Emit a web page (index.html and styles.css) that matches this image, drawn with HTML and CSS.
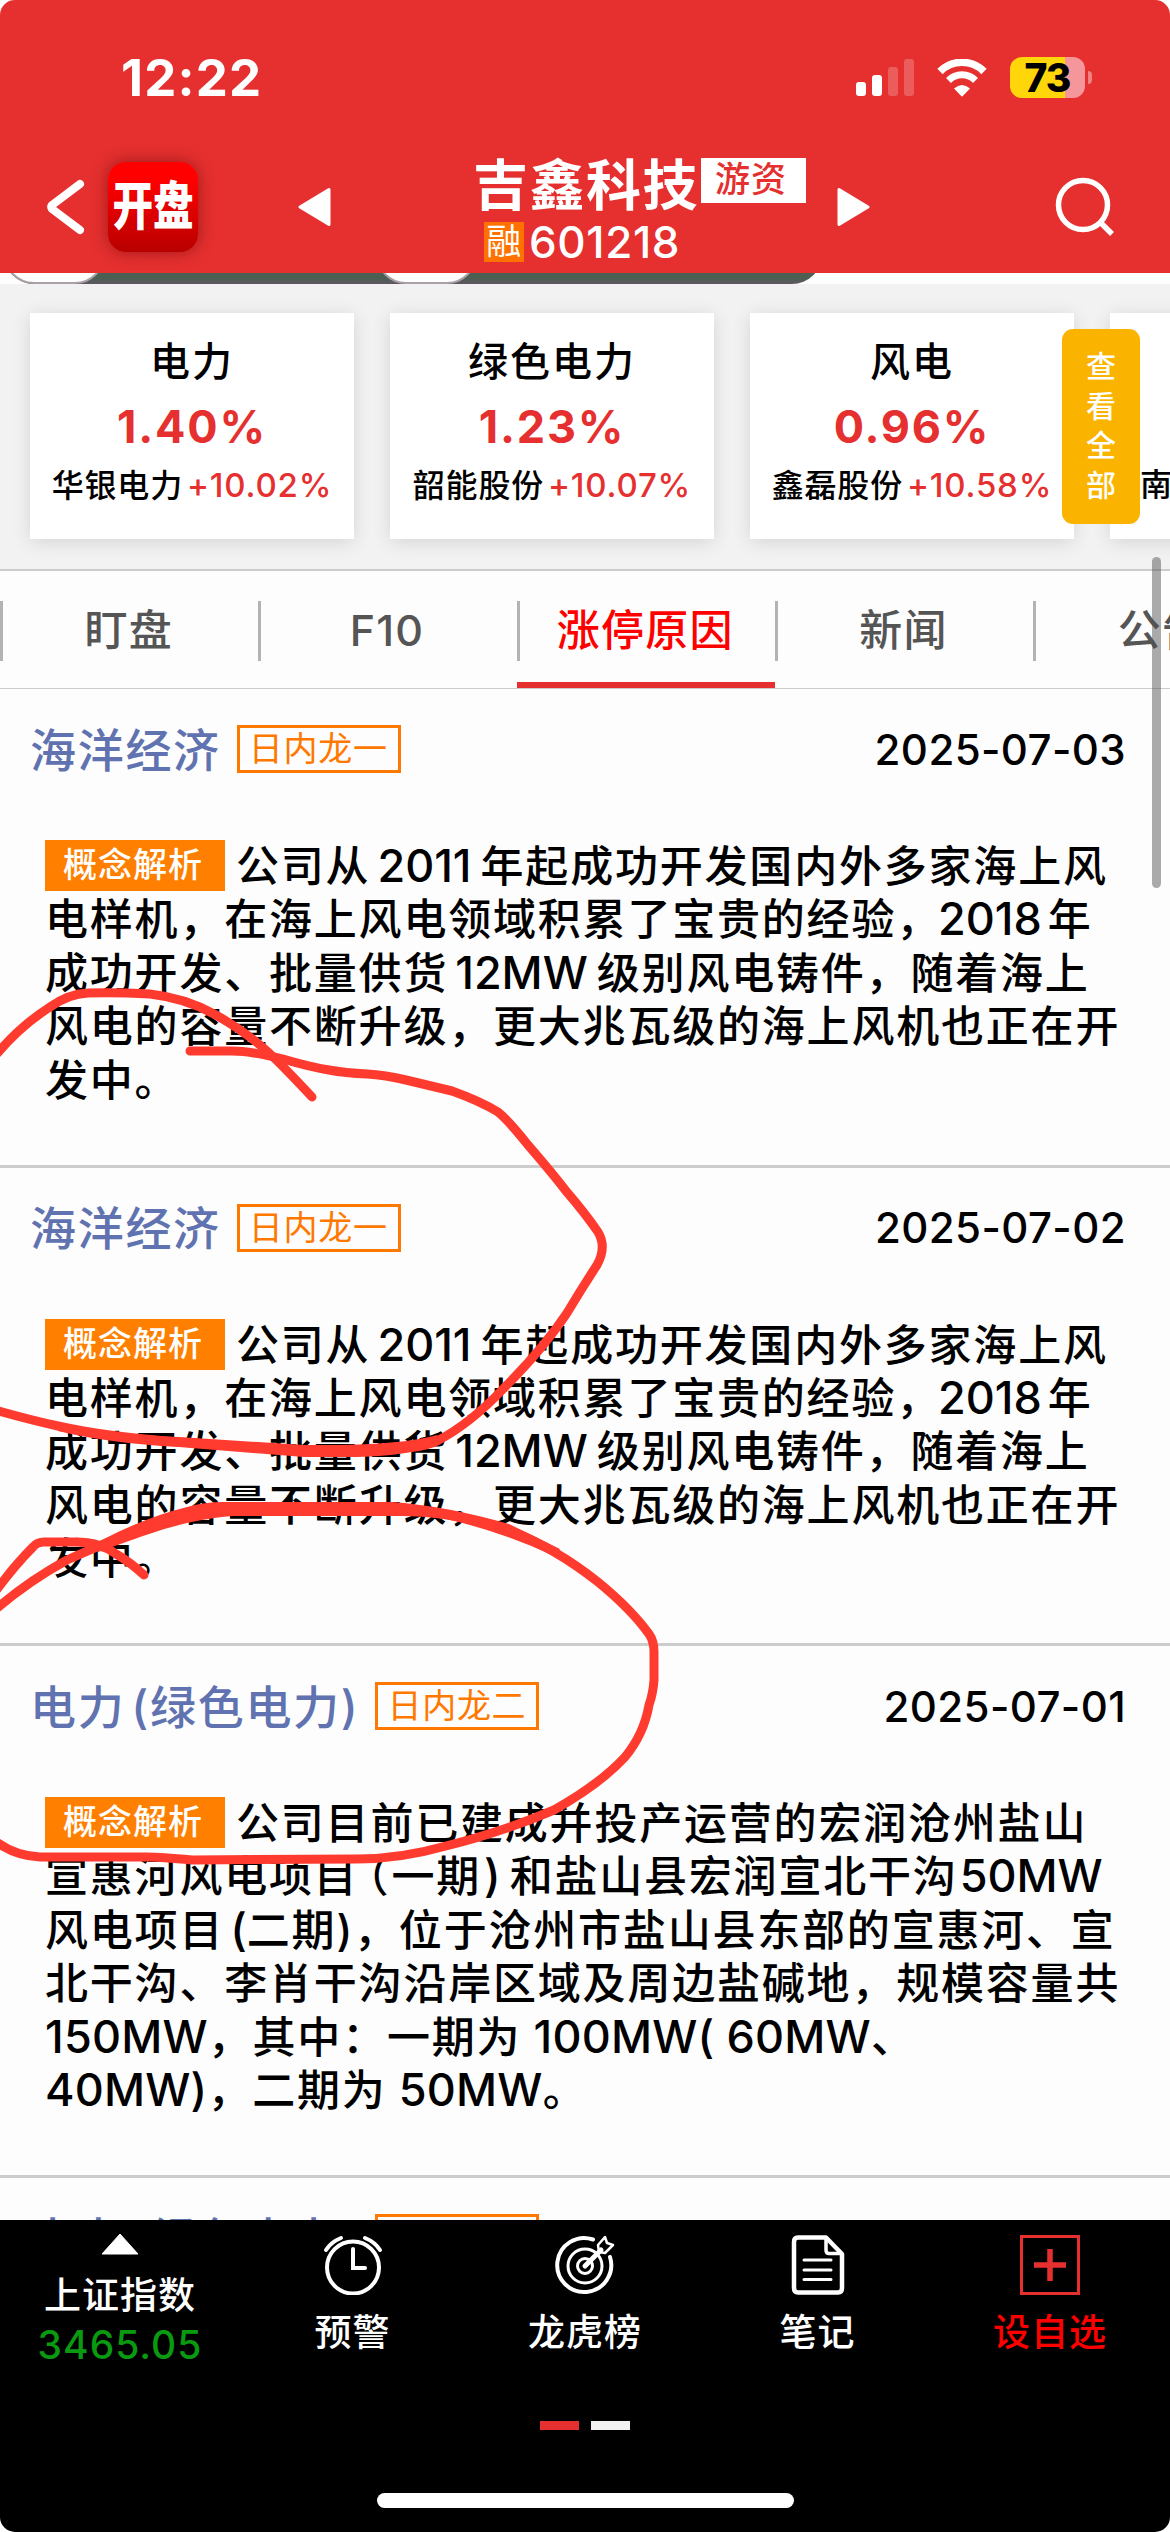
FILE: index.html
```html
<!DOCTYPE html>
<html lang="zh-CN">
<head>
    <meta charset="UTF-8">
    <meta name="viewport" content="width=device-width, initial-scale=1.0">
    <title>吉鑫科技 601218</title>
    <link rel="stylesheet" href="styles.css">
</head>
<body>
    <div class="screen">
        <header class="header">
            <div class="status-bar">
                <div class="time">12:22</div>
                <div class="status-icons">
                    <svg class="signal" width="58" height="37" viewBox="0 0 58 37" fill="#fff">
                        <rect x="0" y="23" width="10" height="14" rx="3"/>
                        <rect x="16" y="16" width="10" height="21" rx="3"/>
                        <rect x="32" y="8" width="10" height="29" rx="3" opacity=".22"/>
                        <rect x="48" y="0" width="10" height="37" rx="3" opacity=".22"/>
                    </svg>
                    <svg class="wifi" width="52" height="38" viewBox="0 0 52 38">
                        <path d="M4 12.500a31 31 0 0 1 44 0" fill="none" stroke="#fff" stroke-width="7.500"/>
                        <path d="M12.500 21.500a19 19 0 0 1 27 0" fill="none" stroke="#fff" stroke-width="7"/>
                        <path d="M18 29.500q8-7 16 0L26.800 37q-.8.800-1.600 0z" fill="#fff"/>
                    </svg>
                    <div class="battery"><span>73</span></div>
                </div>
            </div>

            <div class="nav-bar">
                <svg class="back" width="38" height="56" viewBox="0 0 38 56">
                    <path d="M33 5L5 26q-1.500 2 0 4L33 51" fill="none" stroke="#fff" stroke-width="8" stroke-linecap="round"/>
                </svg>
                <div class="app-icon"><span>开盘</span></div>
                <svg class="prev" width="34" height="40" viewBox="0 0 34 40">
                    <path d="M2 20L31 2.500V37.500z" fill="#fff" stroke="#fff" stroke-width="3" stroke-linejoin="round"/>
                </svg>
                <div class="stock">
                    <div class="stock-name">吉鑫科技<span class="stock-tag">游资</span></div>
                    <div class="stock-code"><span class="margin-tag">融</span>601218</div>
                </div>
                <svg class="next" width="34" height="40" viewBox="0 0 34 40">
                    <path d="M32 20L3 2.500V37.500z" fill="#fff" stroke="#fff" stroke-width="3" stroke-linejoin="round"/>
                </svg>
                <svg class="search" width="62" height="62" viewBox="0 0 62 62" fill="none" stroke="#fff" stroke-width="5.500">
                    <circle cx="28" cy="29" r="24.500"/>
                    <path d="M45 46L57 58"/>
                </svg>
            </div>
        </header>

        <div class="switch-row">
            <div class="switch-track">
                <div class="switch-knob"></div>
                <div class="switch-knob"></div>
            </div>
        </div>

        <section class="sectors">
            <div class="card">
                <h3>电力</h3>
                <div class="rate">1.40%</div>
                <p>华银电力<b>+10.02%</b></p>
            </div>
            <div class="card">
                <h3>绿色电力</h3>
                <div class="rate">1.23%</div>
                <p>韶能股份<b>+10.07%</b></p>
            </div>
            <div class="card">
                <h3>风电</h3>
                <div class="rate">0.96%</div>
                <p>鑫磊股份<b>+10.58%</b></p>
            </div>
            <div class="card">
                <h3>&nbsp;</h3>
                <div class="rate">&nbsp;</div>
                <p>南</p>
            </div>
            <div class="view-all">查看全部</div>
        </section>

        <nav class="tabs">
            <div class="tab">盯盘</div>
            <div class="tab">F10</div>
            <div class="tab active">涨停原因</div>
            <div class="tab">新闻</div>
            <div class="tab">公告</div>
        </nav>

        <main class="list">
            <article class="entry">
                <div class="entry-head">
                    <h2>海洋经济</h2>
                    <span class="rank">日内龙一</span>
                    <time>2025-07-03</time>
                </div>
                <p class="reason"><span class="label">概念解析</span>公司从<i>2011</i>年起成功开发国内外多家海上风<br>
                    电样机，在海上风电领域积累了宝贵的经验，<i class="end">2018</i>年<br>
                    成功开发、批量供货<i>12MW</i>级别风电铸件，随着海上<br>
                    风电的容量不断升级，更大兆瓦级的海上风机也正在开<br>
                    发中。</p>
            </article>

            <article class="entry">
                <div class="entry-head">
                    <h2>海洋经济</h2>
                    <span class="rank">日内龙一</span>
                    <time>2025-07-02</time>
                </div>
                <p class="reason"><span class="label">概念解析</span>公司从<i>2011</i>年起成功开发国内外多家海上风<br>
                    电样机，在海上风电领域积累了宝贵的经验，<i class="end">2018</i>年<br>
                    成功开发、批量供货<i>12MW</i>级别风电铸件，随着海上<br>
                    风电的容量不断升级，更大兆瓦级的海上风机也正在开<br>
                    发中。</p>
            </article>

            <article class="entry">
                <div class="entry-head">
                    <h2>电力 (绿色电力)</h2>
                    <span class="rank">日内龙二</span>
                    <time>2025-07-01</time>
                </div>
                <p class="reason"><span class="label">概念解析</span>公司目前已建成并投产运营的宏润沧州盐山<br>
                    宣惠河风电项目<span class="paren">（</span>一期<i class="close">)</i>和盐山县宏润宣北干沟<i class="tail">50MW</i><br>
                    风电项目<i class="open">(</i>二期)，位于沧州市盐山县东部的宣惠河、宣<br>
                    北干沟、李肖干沟沿岸区域及周边盐碱地，规模容量共<br>
                    <i class="plain">150MW</i>，其中：一期为<i class="plain"> 100MW( 60MW</i>、<br>
                    <i class="plain">40MW)</i>，二期为<i class="plain"> 50MW</i>。</p>
            </article>

            <article class="entry">
                <div class="entry-head">
                    <h2>电力 (绿色电力)</h2>
                    <span class="rank">日内龙一</span>
                </div>
            </article>
        </main>

        <footer class="bottom-bar">
            <div class="actions">
                <div class="index">
                    <svg width="38" height="22" viewBox="0 0 38 22"><path d="M19 1L37 21H1z" fill="#fff" stroke="#fff" stroke-linejoin="round"/></svg>
                    <div>上证指数</div>
                    <div class="index-value">3465.05</div>
                </div>
                <div class="action alarm">
                    <svg width="60" height="60" viewBox="0 0 60 60" fill="none" stroke="#fff" stroke-width="4" stroke-linecap="round">
                        <circle cx="30" cy="32.500" r="26"/>
                        <path d="M30 14V33H42M3 15Q8 7 18 3M42 3Q52 7 57 15"/>
                    </svg>
                    <div>预警</div>
                </div>
                <div class="action dragon">
                    <svg width="60" height="60" viewBox="0 0 60 60" fill="none" stroke="#fff" stroke-width="4" stroke-linecap="round">
                        <path d="M38 4.500A27 27 0 1 0 55 22"/>
                        <circle cx="30" cy="31" r="17" stroke-width="3"/>
                        <circle cx="30" cy="31" r="7.500" stroke-width="3"/>
                        <path d="M30 31L46 15" stroke-width="5"/>
                        <path d="M43 10L50 2L52 8L58 10L50 18L44 17z" stroke-width="2.500" stroke-linejoin="round"/>
                    </svg>
                    <div>龙虎榜</div>
                </div>
                <div class="action notes">
                    <svg width="54" height="60" viewBox="0 0 54 60" fill="none" stroke="#fff" stroke-width="4.500" stroke-linejoin="round">
                        <path d="M7 2.500H35L51 19V53Q51 57.500 47 57.500H7Q3 57.500 3 53V7Q3 2.500 7 2.500z"/>
                        <path d="M35 3V15Q35 18.500 38 18.500H50" stroke-width="3.500"/>
                        <path d="M13 25H40M13 35H40M13 44.500H40" stroke-width="3" stroke-linecap="round"/>
                    </svg>
                    <div>笔记</div>
                </div>
                <div class="action add">
                    <svg width="60" height="60" viewBox="0 0 60 60" fill="none" stroke="#e5302f">
                        <rect x="1.500" y="1.500" width="57" height="57" stroke-width="3"/>
                        <path d="M30 14V46M14 30H46" stroke-width="5.500"/>
                    </svg>
                    <div>设自选</div>
                </div>
            </div>
            <div class="pager"><span class="current"></span><span></span></div>
            <div class="home-indicator"></div>
        </footer>

        <div class="scrollbar"></div>

        <!-- hand-drawn marker circles -->
        <svg class="marker" width="1170" height="2532" viewBox="0 0 1170 2532">
            <path d="M-5 1056Q20 1026 50 1007Q68 994 88 993Q115 992 150 994Q185 998 214 1014Q245 1031 268 1052Q284 1067 312 1097"/>
            <path d="M190 1051H232Q250 1051 283 1059Q310 1067 329 1070Q345 1073 367 1074Q385 1075 406 1080L452 1091Q480 1101 498 1112Q508 1120 528 1145Q553 1174 566 1191Q585 1213 598 1232Q607 1247 597 1265Q582 1288 567 1313Q543 1349 504 1388Q470 1424 437 1441Q420 1450 357 1451Q304 1451 250 1447L179 1442Q107 1437 58 1426Q30 1420-5 1410"/>
            <path d="M144 1575Q130 1562 116 1554Q100 1542 76 1542H44Q37 1542 33 1547Q14 1566-5 1592"/>
            <path d="M-5 1610Q27 1582 67 1560Q98 1546 143 1528Q187 1509 232 1509H384Q446 1510 509 1530Q555 1548 598 1582Q631 1609 649 1634Q654 1641 654 1652V1680Q653 1694 649 1705Q644 1734 625 1757Q600 1784 554 1810Q505 1831 446 1846Q400 1859 357 1859L192 1860Q160 1857 147 1857H40Q15 1856-5 1841"/>
            <path class="thick" d="M98 1542Q143 1518 187 1507Q205 1502 223 1502H393Q446 1506 509 1524L560 1549L554 1556Q500 1531 446 1519Q420 1516 402 1516H232Q187 1520 143 1536L98 1552z"/>
            <path class="thick" d="M58 1423Q107 1434 179 1437L304 1445Q400 1446 437 1435V1444Q410 1456 357 1457H304L179 1447Q107 1443 58 1431z"/>
        </svg>
    </div>
</body>
</html>
```
FILE: styles.css
```css
* {
    box-sizing: border-box;
}

body {
    margin: 0;
    background: #fff;
    font-family: Inter, "Noto Sans CJK SC", sans-serif;
    font-weight: 500;
    color: #000;
}

.screen {
    position: relative;
    display: flex;
    flex-direction: column;
    width: 1170px;
    height: 2532px;
    overflow: hidden;
    border-radius: 15px;
    background: #fdfdfd;
}

h2, h3, p {
    margin: 0;
    font-weight: 500;
}

svg {
    display: block;
    flex: none;
}

/* header */
.header {
    flex: none;
    height: 273px;
    background: #e5302f;
    color: #fff;
}

.status-bar {
    display: flex;
    justify-content: space-between;
    align-items: center;
    height: 155px;
    padding: 0 78px 0 121px;
}

.time {
    font-size: 51px;
    font-weight: 700;
    letter-spacing: 1.2px;
}

.status-icons {
    display: flex;
    align-items: center;
    gap: 22px;
}

.battery {
    position: relative;
    width: 75px;
    height: 41px;
    margin-right: 7px;
    border-radius: 12px;
    background: linear-gradient(to right, #ffd60a 73%, #f5979a 73%);
    color: #000;
    font-size: 39px;
    font-weight: 800;
    line-height: 42px;
    text-align: center;
    letter-spacing: -1px;
}

.battery::after {
    content: "";
    position: absolute;
    left: 78px;
    top: 14px;
    width: 4px;
    height: 13px;
    border-radius: 0 6px 6px 0;
    background: #f18083;
}

.nav-bar {
    display: flex;
    align-items: center;
    height: 104px;
    padding: 0 53px 0 47px;
}

.app-icon {
    display: flex;
    align-items: center;
    justify-content: center;
    flex: none;
    width: 90px;
    height: 90px;
    margin-left: 23px;
    border-radius: 18px;
    background: linear-gradient(#fe0000 20%, #b80000);
    box-shadow: 0 0 16px rgba(90, 0, 0, 0.5);
}

.app-icon span {
    font-size: 52px;
    font-weight: 900;
    line-height: 60px;
    white-space: nowrap;
    transform: scaleX(0.78);
}

.prev {
    margin-left: 100px;
}

.stock {
    width: 222px;
    margin-left: 141px;
    padding-top: 3px;
}

.stock-name {
    position: relative;
    height: 67px;
    font-size: 55px;
    font-weight: 700;
    line-height: 65px;
    letter-spacing: 1.5px;
    white-space: nowrap;
}

.stock-tag {
    position: absolute;
    left: 228px;
    top: 5px;
    width: 105px;
    height: 45px;
    background: #fff;
    color: #e5302f;
    font-size: 35px;
    font-weight: 500;
    line-height: 43px;
    text-align: center;
    letter-spacing: 1px;
    padding-right: 5px;
}

.stock-code {
    display: flex;
    align-items: center;
    height: 44px;
    padding-left: 11px;
    font-size: 44px;
    letter-spacing: 0.6px;
}

.margin-tag {
    width: 40px;
    height: 40px;
    margin-right: 5px;
    background: #ff7200;
    font-size: 35px;
    font-weight: 400;
    line-height: 38px;
    text-align: center;
}

.next {
    margin-left: 141px;
}

.search {
    margin-left: auto;
}

/* switch cut off by the header */
.switch-row {
    flex: none;
    height: 11px;
    overflow: hidden;
}

.switch-track {
    display: flex;
    gap: 271px;
    width: 818px;
    height: 60px;
    margin: -49px 0 0 4px;
    border-radius: 30px;
    background: linear-gradient(#4b5f52 90%, #605660);
}

.switch-knob {
    width: 101px;
    height: 60px;
    border: 2px solid #aaa0a8;
    border-radius: 30px;
    background: #fff;
}

/* sector cards */
.sectors {
    position: relative;
    display: flex;
    gap: 36px;
    flex: none;
    height: 287px;
    padding: 29px 0 0 30px;
    overflow: hidden;
    background: #f2f2f2;
    border-bottom: 2px solid #ccc;
}

.card {
    flex: none;
    width: 324px;
    height: 226px;
    background: #fff;
    box-shadow: 0 3px 18px rgba(0, 0, 0, 0.12);
    text-align: center;
    white-space: nowrap;
}

.card h3 {
    margin-top: 19px;
    font-size: 40px;
    line-height: 60px;
    letter-spacing: 2px;
}

.rate {
    margin-top: 5px;
    color: #e5302f;
    font-size: 45px;
    font-weight: 700;
    line-height: 60px;
    letter-spacing: 1.8px;
}

.card p {
    font-size: 32px;
    line-height: 56px;
    letter-spacing: 0.8px;
}

.card p b {
    margin-left: 4px;
    color: #e5302f;
    font-size: 33px;
    font-weight: 500;
}

.card:nth-child(4) p {
    padding-left: 30px;
    text-align: left;
}

.view-all {
    position: absolute;
    left: 1062px;
    top: 45px;
    width: 78px;
    height: 195px;
    padding: 18px 24px;
    border-radius: 11px;
    background: #fab400;
    color: #fff;
    font-size: 30px;
    line-height: 39.5px;
}

/* tabs */
.tabs {
    display: flex;
    flex: none;
    height: 118px;
    overflow: hidden;
    border-bottom: 1px solid #ccc;
}

.tab {
    position: relative;
    flex: none;
    width: 258.3px;
    padding-right: 1px;
    color: #555;
    font-size: 43px;
    line-height: 119px;
    text-align: center;
    letter-spacing: 1.2px;
}

.tab::before {
    content: "";
    position: absolute;
    left: 0;
    top: 30px;
    width: 3px;
    height: 60px;
    background: #b3b3b3;
}

.tab.active {
    color: #f00;
    border-bottom: 6px solid #e5302f;
}

/* entries */
.list {
    flex: 1;
    min-height: 0;
    overflow: hidden;
}

.entry {
    padding: 36px 45px 57.5px;
    border-bottom: 3px solid #ccc;
}

.entry-head {
    display: flex;
    align-items: center;
    height: 48px;
    margin: 0 -1px 67px -15px;
}

.entry-head h2 {
    margin-top: -5px;
    color: #6073b0;
    font-size: 46px;
    letter-spacing: 1.7px;
    word-spacing: -8px;
    white-space: nowrap;
}

.rank {
    width: 164px;
    height: 48px;
    margin-left: 16px;
    border: 3px solid #ff7800;
    color: #ff7800;
    font-size: 34px;
    font-weight: 400;
    line-height: 41px;
    padding-left: 9px;
    letter-spacing: 0.7px;
}

.entry-head time {
    margin-left: auto;
    font-size: 42px;
    letter-spacing: 0.4px;
}

.reason {
    font-size: 43px;
    line-height: 53.4px;
    letter-spacing: 1.8px;
    white-space: nowrap;
}

.reason i {
    margin: 0 9px 0 7px;
    font-size: 45px;
    font-style: normal;
    line-height: 1;
    letter-spacing: 0;
}

.reason i.end {
    margin-left: -3px;
    margin-right: 6px;
}

.reason i.open {
    margin-left: 6px;
    margin-right: 0;
}

.reason i.close {
    margin-left: 3px;
}

.reason i.tail {
    margin-left: 2px;
}

.reason i.plain {
    margin: 0;
    letter-spacing: 0.2px;
    white-space: pre;
}

.paren {
    margin: 0 1px 0 -13px;
}

.label {
    display: inline-block;
    width: 180px;
    height: 51px;
    margin-right: 11px;
    background: #ff8000;
    color: #fff;
    font-size: 34px;
    line-height: 49px;
    letter-spacing: 1px;
    padding-left: 18px;
    vertical-align: top;
}

/* bottom bar */
.bottom-bar {
    flex: none;
    height: 312px;
    background: #000;
    color: #fff;
    font-size: 37px;
    line-height: 46px;
    letter-spacing: 1px;
}

.actions {
    position: relative;
    display: flex;
    height: 201px;
    padding: 15px 35px 0 35px;
    justify-content: space-between;
}

.index, .action {
    display: flex;
    flex-direction: column;
    align-items: center;
    width: 170px;
}

.index svg {
    margin: -2px 0 18px;
}

.index-value {
    margin-top: 3px;
    color: #0a9a10;
    font-size: 39px;
    letter-spacing: 1px;
}

.action div {
    margin-top: 15px;
}

.add div {
    color: #f00;
}

.pager {
    display: flex;
    justify-content: center;
    gap: 12px;
}

.pager span {
    width: 39px;
    height: 9px;
    background: #f2f2f2;
}

.pager .current {
    background: #e5302f;
}

.home-indicator {
    width: 417px;
    height: 15px;
    margin: 63px auto 0;
    border-radius: 8px;
    background: #fff;
}

/* overlays */
.scrollbar {
    position: absolute;
    left: 1152px;
    top: 557px;
    width: 9px;
    height: 331px;
    border-radius: 5px;
    background: rgba(80, 80, 80, 0.48);
}

.marker {
    position: absolute;
    left: 0;
    top: 0;
    fill: none;
    stroke: #ff3b30;
    stroke-width: 9;
    stroke-linecap: round;
    stroke-linejoin: round;
}

.marker .thick {
    fill: #ff3b30;
    stroke: none;
}
```
